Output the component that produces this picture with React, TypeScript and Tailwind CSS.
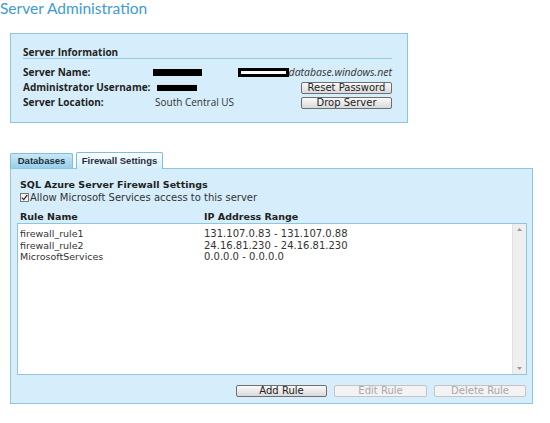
import React from 'react';

const rules = [
    { name: 'firewall_rule1', range: '131.107.0.83 - 131.107.0.88' },
    { name: 'firewall_rule2', range: '24.16.81.230 - 24.16.81.230' },
    { name: 'MicrosoftServices', range: '0.0.0.0 - 0.0.0.0' },
];

function SmallButton({ label, disabled, className = '' }: { label: string; disabled?: boolean; className?: string }) {
    return (
        <button
            className={
                'h-[12px] flex items-center justify-center rounded-[2px] border text-[10px] leading-none font-["DejaVu_Sans",sans-serif] ' +
                (disabled
                    ? 'border-[#c4c4c4] bg-[#f3f3f3] text-[#a8a8a8] '
                    : 'border-[#6f6f6f] bg-gradient-to-b from-[#fafafa] to-[#d9d9d9] text-[#222] ') +
                className
            }
        >
            {label}
        </button>
    );
}

export default function App() {
    return (
        <div className="w-[550px] h-[423px] bg-white overflow-hidden flex flex-col">
            <h1 className="h-[17px] leading-[16px] text-[15.5px] text-[#3d9bd5] font-['Lato',sans-serif]">
                Server Administration
            </h1>

            {/* server info */}
            <div className="ml-[10px] mt-[16px] w-[398px] h-[90px] border border-[#8cc8d9] bg-[#d6eefb] pl-[12px] pr-[15px] pt-[12px] font-['Open_Sans',sans-serif] text-[#222]">
                <div className="h-[13px] leading-[12px] text-[10px] font-bold border-b border-[#95cde0]">Server Information</div>
                <div className="mt-[6px] h-[15px] flex items-center text-[10px]">
                    <span className="w-[130px] font-bold">Server Name:</span>
                    <span className="w-[49px] h-[7px] bg-black" />
                    <span className="flex-1" />
                    <span className="w-[51px] h-[9px] border-y-[3px] border-x-[3px] border-black bg-white" />
                    <span className="italic text-[10.5px] text-[#333]">database.windows.net</span>
                </div>
                <div className="h-[15px] flex items-center text-[10px]">
                    <span className="w-[134px] font-bold">Administrator Username:</span>
                    <span className="w-[40px] h-[7px] bg-black border-t border-[#ddd]" />
                    <span className="flex-1" />
                    <SmallButton label="Reset Password" className="w-[91px]" />
                </div>
                <div className="h-[15px] flex items-center text-[10px]">
                    <span className="w-[132px] font-bold">Server Location:</span>
                    <span className="text-[#333]">South Central US</span>
                    <span className="flex-1" />
                    <SmallButton label="Drop Server" className="w-[91px]" />
                </div>
            </div>

            {/* tabs */}
            <div className="ml-[10px] mt-[29px] flex items-end gap-[3px] font-['Liberation_Sans',sans-serif] text-[9.5px] font-bold text-[#1f2f3f]">
                <div className="w-[63px] h-[15px] flex items-center justify-center border border-b-0 border-[#7fbfd6] rounded-t-[2px] bg-gradient-to-b from-[#cbe8f6] to-[#94cfe8]">
                    Databases
                </div>
                <div className="w-[87px] h-[17px] -mb-[1px] flex items-center justify-center border border-b-0 border-[#7fbfd6] rounded-t-[2px] bg-gradient-to-b from-[#fbfdff] to-[#d6eefb] relative">
                    Firewall Settings
                </div>
            </div>
            <div className="ml-[10px] w-[523px] h-[236px] border border-[#8cc8d9] bg-[#d6eefb] pt-[10px] pl-[6px] pr-[5px] font-['DejaVu_Sans',sans-serif] text-[#222] flex flex-col">
                <div className="pl-[3px]">
                    <div className="h-[12px] leading-[12px] text-[9.5px] font-bold">SQL Azure Server Firewall Settings</div>
                    <div className="h-[12px] flex items-center text-[10px] text-[#333]">
                        <span className="w-[9px] h-[9px] border border-[#777] bg-[#f4f4f4] flex items-center justify-center">
                            <svg width="7" height="7" viewBox="0 0 7 7">
                                <path d="M0.8 3.6 L2.7 5.6 L6.3 1.0" fill="none" stroke="#333" strokeWidth="1.3" />
                            </svg>
                        </span>
                        <span className="ml-[1px]">Allow Microsoft Services access to this server</span>
                    </div>
                    <div className="mt-[8px] h-[12px] flex items-center text-[9.5px] font-bold">
                        <span className="w-[184px]">Rule Name</span>
                        <span>IP Address Range</span>
                    </div>
                </div>
                <div className="h-[152px] border border-[#8cc8d9] bg-white flex">
                    <div className="flex-1 pt-[4px] pl-[2px] text-[10px] text-[#333]">
                        {rules.map((r) => (
                            <div key={r.name} className="h-[11.5px] leading-[11.5px] flex">
                                <span className="w-[184px] text-[9.5px]">{r.name}</span>
                                <span>{r.range}</span>
                            </div>
                        ))}
                    </div>
                    <div className="w-[14px] bg-[#efefef] border-l border-[#e2e2e2] flex flex-col items-center justify-between py-[4px]">
                        <svg width="5" height="3" viewBox="0 0 5 3">
                            <path d="M0 3 L2.5 0 L5 3 Z" fill="#999" />
                        </svg>
                        <svg width="5" height="3" viewBox="0 0 5 3">
                            <path d="M0 0 L2.5 3 L5 0 Z" fill="#999" />
                        </svg>
                    </div>
                </div>
                <div className="mt-[10px] flex justify-end gap-[7px] pr-[1px]">
                    <SmallButton label="Add Rule" className="w-[91px]" />
                    <SmallButton label="Edit Rule" disabled className="w-[93px]" />
                    <SmallButton label="Delete Rule" disabled className="w-[92px]" />
                </div>
            </div>
        </div>
    );
}
